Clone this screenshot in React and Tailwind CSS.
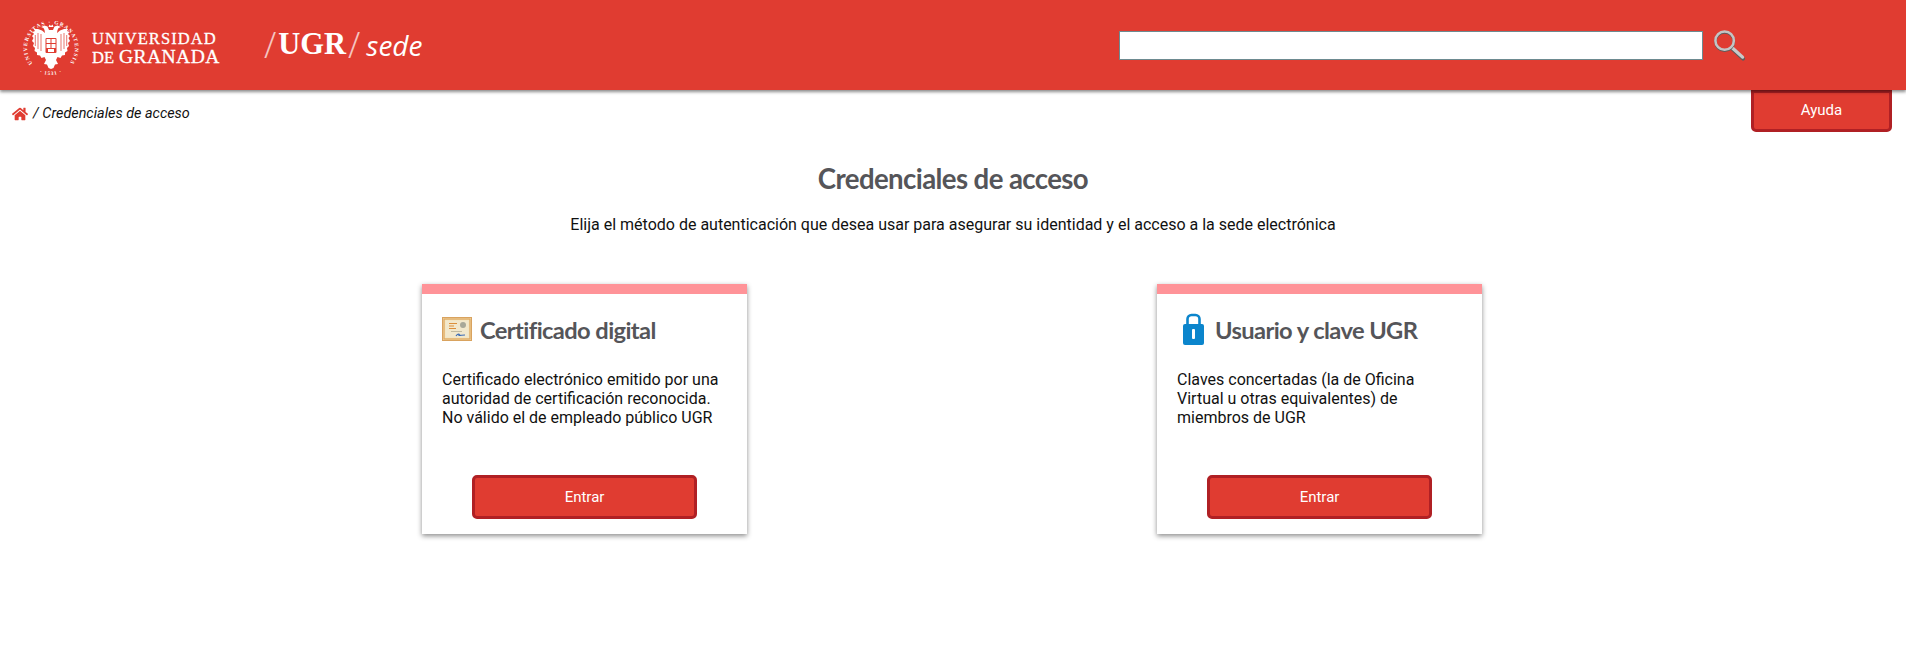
import { FaHome } from "react-icons/fa";

const roboto = { fontFamily: "Roboto, sans-serif" };

// one half of the eagle, mirrored for the other side
const EagleHalf = ({ flip }) => (
  <g transform={flip ? "translate(62 0) scale(-1 1)" : undefined}>
    <path
      fill="#fff"
      d="M31 13 L33 13 L34.5 9.5 L37.5 8.5 L41 10 L38.5 11 L37.5 13 L37 16 L40 13.5 L44 12 L48 12 L47 14 L49.5 15 L48 17 L50 19 L48.5 21 L50 24 L48 26 L49 29 L47 31 L47.5 34 L45 35.5 L45 38 L42 38.5 L40.5 41 L37.5 40 L36 43 L38 47 L35 47.5 L33.5 51 L31 52z"
    />
    <path stroke="#e03c31" strokeWidth="0.7" d="M41 17v17M44 16v16M46.7 18v11" />
  </g>
);

// University seal: ring of text round the double-headed eagle
const Seal = () => (
  <svg width="62" height="62" viewBox="0 0 62 62" className="shrink-0 mt-[6px]">
    <defs>
      <path id="ringTop" d="M12.6 46.4 A24 24 0 1 1 49.4 46.4" />
      <path id="ringBottom" d="M10 48 A27 27 0 0 0 52 48" />
    </defs>
    <text fill="#fff" fontSize="5.4" fontWeight="bold" fontFamily="Liberation Serif, serif">
      <textPath href="#ringTop" textLength="107" lengthAdjust="spacing">
        UNIVERSITAS · GRANATENSIS
      </textPath>
    </text>
    <text fill="#fff" fontSize="5" fontWeight="bold" letterSpacing="1" textAnchor="middle" fontFamily="Liberation Serif, serif">
      <textPath href="#ringBottom" startOffset="50%">· 1531 ·</textPath>
    </text>
    <path fill="#fff" d="M28.5 10l1-2.5 1.5 1.5 1.5-1.5 1 2.5z" />
    <EagleHalf />
    <EagleHalf flip />
    <rect x="25.5" y="21" width="11" height="15" rx="1" fill="#e03c31" />
    <path fill="#fff" d="M26.5 22h4v4h-4zM31.5 22h4v4h-4zM26.5 27h4v4h-4zM31.5 27h4v4h-4zM28 32h6v3h-6z" />
  </svg>
);

const SearchIcon = () => (
  <svg width="32" height="32" viewBox="0 0 33 32" fill="none" className="shrink-0">
    <path d="M20 20 L31 30" stroke="#5c5c5c" strokeWidth="4" strokeLinecap="round" />
    <path d="M19.5 18.5 L30.5 28.5" stroke="#c9c9c9" strokeWidth="3.4" strokeLinecap="round" />
    <circle cx="12" cy="12.5" r="9.5" stroke="#5c5c5c" strokeWidth="2.6" />
    <circle cx="12" cy="11.5" r="9.5" stroke="#c4c4c4" strokeWidth="2.6" />
  </svg>
);

const CertificateIcon = () => (
  <svg width="30" height="25" viewBox="0 0 30 25" className="shrink-0">
    <rect x="0.5" y="0.5" width="29" height="23" fill="#f3e6c4" stroke="#d9a35f" />
    <rect x="2" y="2" width="26" height="20" fill="none" stroke="#e0aa62" strokeWidth="1.4" />
    <rect x="4" y="4" width="22" height="16" fill="#f2e8cc" />
    <path d="M7 6.5h8M7 9h5M7 11.5h7" stroke="#dc8f3a" strokeWidth="1" />
    <path d="M9 14.5h11" stroke="#b5ad93" strokeWidth="0.8" />
    <circle cx="21" cy="8" r="3" fill="#a8a898" />
    <path d="M14 19c2-3 4-2 3-1s3 0 6 0" stroke="#3d6cb5" strokeWidth="1.2" fill="none" />
  </svg>
);

const LockIcon = () => (
  <svg width="21" height="32" viewBox="0 0 21 32" className="shrink-0 ml-[6px]">
    <path d="M4.5 12V6a4 4 0 0 1 4-4h4a4 4 0 0 1 4 4v6" fill="none" stroke="#0b85cc" strokeWidth="2.6" />
    <rect x="0" y="11" width="21" height="21" rx="2" fill="#0b85cc" />
    <rect x="9" y="16" width="3" height="10" rx="1" fill="#fff" />
  </svg>
);

const RedButton = ({ className, children }) => (
  <button
    className={`flex items-center justify-center bg-[#e03c31] border-[3px] border-[#b02024] text-white text-[15px] ${className}`}
    style={roboto}
  >
    {children}
  </button>
);

const Card = ({ icon, title, titleGap, children }) => (
  <div className="w-[325px] h-[250px] bg-white border-t-[10px] border-[#ff9398] shadow-[0_2px_5px_rgba(0,0,0,0.45)] flex flex-col">
    <div className="h-[70px] pl-[20px] flex items-center" style={{ gap: titleGap }}>
      {icon}
      <h2 className="mt-[3px] text-[23.7px] font-bold text-[#555559] tracking-[-0.6px] font-['Lato',sans-serif]">{title}</h2>
    </div>
    <p className="mt-[6px] pl-[20px] pr-[27px] text-[16px] leading-[19px] text-[#111]" style={roboto}>
      {children}
    </p>
    <div className="mt-auto mb-[15px] flex justify-center">
      <RedButton className="w-[225px] h-[44px] rounded-[5px]">Entrar</RedButton>
    </div>
  </div>
);

export default function App() {
  return (
    <div className="min-h-[654px] bg-white">
      <header className="relative z-10 h-[90px] bg-[#e03c31] shadow-[0_2px_3px_rgba(0,0,0,0.45)] flex items-center text-white">
        <div className="pl-[20px]">
          <Seal />
        </div>
        <div className="ml-[10px] mt-[5px] w-[128px] font-['Liberation_Serif',serif] text-white [-webkit-text-stroke:0.3px_white]">
          <div className="pt-[1px] text-[16.5px] leading-[18px] tracking-[1.1px] whitespace-nowrap">UNIVERSIDAD</div>
          <div className="text-[16.5px] leading-[18px] whitespace-nowrap">
            DE<span className="ml-[5px] text-[19.6px] tracking-[0.4px]">GRANADA</span>
          </div>
        </div>
        <div className="ml-[44px] flex items-center w-[165px]">
          <span className="text-[36px] font-light font-['Open_Sans',sans-serif] opacity-70">/</span>
          <span className="ml-[2px] text-[30.5px] font-bold font-['Liberation_Serif',serif]">UGR</span>
          <span className="ml-[2px] text-[36px] font-light font-['Open_Sans',sans-serif] opacity-70">/</span>
          <span className="ml-[6px] text-[28px] italic font-['Open_Sans',sans-serif]">sede</span>
        </div>
        <div className="ml-[690px] flex items-center gap-[10px]">
          <div className="w-[584px] h-[29px] bg-white border border-[#6d8a90]" />
          <SearchIcon />
        </div>
      </header>

      <div className="flex items-start justify-between pl-[12px] pr-[14px]">
        <div className="mt-[13px] flex items-center gap-[5px] text-[14.4px] italic text-[#111]" style={roboto}>
          <FaHome className="text-[#e03c31] text-[16px]" />
          <span>/ Credenciales de acceso</span>
        </div>
        <RedButton className="w-[141px] h-[42px] pb-[2px] rounded-b-[5px]">Ayuda</RedButton>
      </div>

      <h1 className="mt-[29px] text-center text-[27.6px] leading-[36px] font-bold text-[#555559] tracking-[-0.6px] font-['Lato',sans-serif]">
        Credenciales de acceso
      </h1>
      <p className="mt-[16px] text-center text-[16px] leading-[24px] text-[#111]" style={roboto}>
        Elija el método de autenticación que desea usar para asegurar su identidad y el acceso a la sede electrónica
      </p>

      <div className="mt-[47px] ml-[217px] w-[1470px] grid grid-cols-2">
        <div className="flex justify-center">
          <Card icon={<CertificateIcon />} title="Certificado digital" titleGap="8px">
            Certificado electrónico emitido por una autoridad de certificación reconocida. No válido el de empleado público UGR
          </Card>
        </div>
        <div className="flex justify-center">
          <Card icon={<LockIcon />} title="Usuario y clave UGR" titleGap="11px">
            Claves concertadas (la de Oficina Virtual u otras equivalentes) de miembros de UGR
          </Card>
        </div>
      </div>
    </div>
  );
}
